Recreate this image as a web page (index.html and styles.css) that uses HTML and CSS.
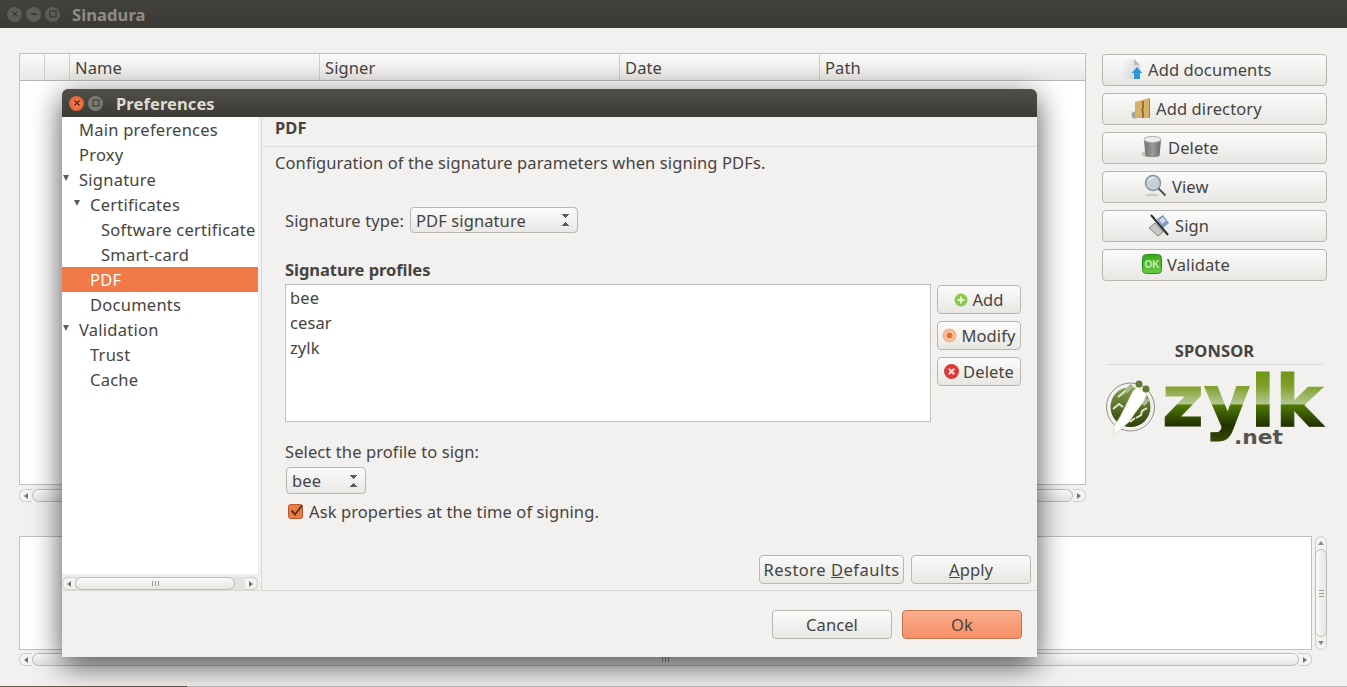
FILE: index.html
```html
<!DOCTYPE html>
<html lang="en">
<head>
    <meta charset="UTF-8">
    <title>Sinadura</title>
    <link rel="stylesheet" href="styles.css">
</head>
<body>
    <div class="titlebar main-title">
        <span class="wbtn"><svg width="8" height="8" viewBox="0 0 8 8"><path d="M1.500 1.500l5 5M6.500 1.500l-5 5" stroke="#2f2e2b" stroke-width="1"/></svg></span>
        <span class="wbtn"><svg width="8" height="8" viewBox="0 0 8 8"><path d="M1 4h6" stroke="#2f2e2b" stroke-width="1.400"/></svg></span>
        <span class="wbtn"><svg width="8" height="8" viewBox="0 0 8 8"><rect x="1" y="1" width="6" height="6" fill="none" stroke="#2f2e2b"/></svg></span>
        <span class="title-text">Sinadura</span>
    </div>

    <div class="main">
        <div class="top">
            <div class="docs">
                <div class="table">
                    <div class="thead">
                        <div class="th"></div>
                        <div class="th"></div>
                        <div class="th">Name</div>
                        <div class="th">Signer</div>
                        <div class="th">Date</div>
                        <div class="th">Path</div>
                    </div>
                </div>
                <div class="hscroll">
                    <span class="step step-l"></span><span class="thumb"></span><span class="step step-r"></span>
                </div>
            </div>

            <div class="actions">
                <button class="btn action pad-docs">
                    <svg width="20" height="22" viewBox="0 0 20 22"><defs><linearGradient id="docg" x1="0" y1="0" x2="1" y2="1"><stop offset="0" stop-color="#f4f4f4"/><stop offset="1" stop-color="#d0d3d6"/></linearGradient></defs><path d="M1 1h10l6 6v14H1z" fill="url(#docg)"/><path d="M11 1l6 6h-6z" fill="#b9bcbf"/><path d="M14 9l5.500 6H17v6h-6v-6H8.500z" fill="#2f97d8"/></svg>
                    Add documents
                </button>
                <button class="btn action pad-dir">
                    <svg width="20" height="24" viewBox="0 0 20 24"><ellipse cx="4" cy="19" rx="3.500" ry="3.500" fill="#a5a39d"/><path d="M4 6l14-4v20H4z" fill="#d8b068"/><path d="M18 2l1 1v19h-1z" fill="#a5803f"/><path d="M12 5v7l-1 2 1 2v6" stroke="#6f5426" stroke-width="1.300" fill="none"/></svg>
                    Add directory
                </button>
                <button class="btn action pad-del">
                    <svg width="22" height="24" viewBox="0 0 22 24"><defs><linearGradient id="can" x1="0" y1="0" x2="1" y2="0"><stop offset="0" stop-color="#6f706e"/><stop offset="0.5" stop-color="#9b9c9a"/><stop offset="1" stop-color="#6a6b69"/></linearGradient></defs><ellipse cx="5" cy="19" rx="4.500" ry="3" fill="#c9c7c3"/><path d="M3 5h17l-1.500 16q-7 2.500-14 0z" fill="url(#can)"/><ellipse cx="11.500" cy="4.500" rx="8.500" ry="3" fill="#eeeeec" stroke="#aaaaa8"/></svg>
                    Delete
                </button>
                <button class="btn action pad-view">
                    <svg width="23" height="24" viewBox="0 0 23 24"><ellipse cx="8" cy="21" rx="7" ry="1.500" fill="#cfcdc9"/><circle cx="9" cy="9" r="7.500" fill="#c5d0d8" stroke="#8b9297" stroke-width="1.500"/><path d="M5 6q2-3 6-2.500" stroke="#e9eef1" stroke-width="1.500" fill="none"/><path d="M14.500 14.500l7 7" stroke="#55524d" stroke-width="2"/></svg>
                    View
                </button>
                <button class="btn action pad-sign">
                    <svg width="22" height="24" viewBox="0 0 22 24"><path d="M9 6l6-4 6 8-6 5z" fill="#7f9cbd"/><path d="M11 7l4-3 3 4-4 3z" fill="#cfdbe8"/><path d="M1 15l6-5 8 9-5 4z" fill="#c9c9c7" stroke="#6a6a68" stroke-width="0.800"/><path d="M3 2l17 20" stroke="#2e2d2a" stroke-width="2"/></svg>
                    Sign
                </button>
                <button class="btn action pad-val">
                    <svg width="20" height="20" viewBox="0 0 20 20"><defs><linearGradient id="okg" x1="0" y1="0" x2="0" y2="1"><stop offset="0" stop-color="#38a81d"/><stop offset="1" stop-color="#6bcb46"/></linearGradient></defs><rect x="0.500" y="0.500" width="19" height="19" rx="4" fill="url(#okg)" stroke="#2b8a17"/><text x="10" y="14" text-anchor="middle" class="ok-mark">OK</text></svg>
                    Validate
                </button>

                <div class="sponsor">
                    <div class="sponsor-title">SPONSOR</div>
                    <svg class="logo" width="217" height="76" viewBox="0 0 217 76">
                        <defs>
                            <linearGradient id="zy" gradientUnits="userSpaceOnUse" x1="0" y1="0" x2="0" y2="76">
                                <stop offset="0" stop-color="#6f9612"/>
                                <stop offset="0.2" stop-color="#80a02a"/>
                                <stop offset="0.43" stop-color="#b3c693"/>
                                <stop offset="0.45" stop-color="#4f7a02"/>
                                <stop offset="0.72" stop-color="#203000"/>
                                <stop offset="1" stop-color="#3c5208"/>
                            </linearGradient>
                            <linearGradient id="ball" x1="0" y1="0" x2="0" y2="1">
                                <stop offset="0" stop-color="#86a050"/>
                                <stop offset="1" stop-color="#2c3f05"/>
                            </linearGradient>
                        </defs>
                        <circle cx="24.500" cy="36" r="24" fill="none" stroke="#8e8e8a"/>
                        <circle cx="24.500" cy="36" r="20" fill="url(#ball)"/>
                        <path d="M12 26l5-4 5-5M7 38l6-5 4 3M30 47l5-3 1-4 5-3M24 51l5-4" stroke="#dfe6c8" stroke-width="2" fill="none"/>
                        <path d="M26 14l-6 7M42 28l-5 6" stroke="#a9b78c" stroke-width="4" fill="none"/>
                        <path d="M8 64l0-9 6-9 13-26 4-4 10 7-3 7-9 12-6 9-6 5z" fill="#fff" stroke="#c9d3a8" stroke-width="0.600"/>
                        <circle cx="33" cy="13" r="3.500" fill="#5f7a30"/>
                        <circle cx="40" cy="18" r="3.500" fill="#5f7a30"/>
                        <text x="56" y="55" class="logo-word" fill="url(#zy)" stroke="url(#zy)" textLength="161" lengthAdjust="spacingAndGlyphs">zylk</text>
                        <text x="128" y="73" class="logo-net" textLength="49" lengthAdjust="spacingAndGlyphs">.net</text>
                    </svg>
                </div>
            </div>
        </div>

        <div class="bottom">
            <div class="log-row">
                <div class="log"></div>
                <div class="vscroll">
                    <span class="vstep vstep-up"></span><span class="vthumb"></span><span class="vstep vstep-down"></span>
                </div>
            </div>
            <div class="hscroll log-scroll">
                <span class="step step-l"></span><span class="thumb"></span><span class="step step-r"></span>
            </div>
        </div>
    </div>
    <div class="desk-edge"></div>

    <!-- preferences dialog floats over the main window -->
    <div class="dialog">
        <div class="titlebar dialog-title">
            <span class="wbtn close"><svg width="8" height="8" viewBox="0 0 8 8"><path d="M1.500 1.500l5 5M6.500 1.500l-5 5" stroke="#5a1d08" stroke-width="1.200"/></svg></span>
            <span class="wbtn maxi"><svg width="8" height="8" viewBox="0 0 8 8"><rect x="1" y="1" width="6" height="6" fill="none" stroke="#35342f"/></svg></span>
            <span class="title-text">Preferences</span>
        </div>

        <div class="dialog-body">
            <div class="side">
                <div class="tree">
                    <div class="node lv0">Main preferences</div>
                    <div class="node lv0">Proxy</div>
                    <div class="node lv0"><span class="arrow"></span>Signature</div>
                    <div class="node lv1"><span class="arrow"></span>Certificates</div>
                    <div class="node lv2">Software certificate</div>
                    <div class="node lv2">Smart-card</div>
                    <div class="node lv1 selected">PDF</div>
                    <div class="node lv1">Documents</div>
                    <div class="node lv0"><span class="arrow"></span>Validation</div>
                    <div class="node lv1">Trust</div>
                    <div class="node lv1">Cache</div>
                </div>
                <div class="side-scroll">
                    <div class="hscroll">
                        <span class="step step-l"></span><span class="thumb"></span><span class="step step-r"></span>
                    </div>
                </div>
            </div>

            <div class="content">
                <div class="page-head">PDF</div>
                <p class="page-desc">Configuration of the signature parameters when signing PDFs.</p>

                <div class="form">
                    <div class="type-row">
                        <span class="type-label">Signature type:</span>
                        <div class="select select-type">PDF signature<span class="updown"></span></div>
                    </div>

                    <div class="group-title">Signature profiles</div>
                    <div class="profiles">
                        <div class="list">
                            <div>bee</div>
                            <div>cesar</div>
                            <div>zylk</div>
                        </div>
                        <div class="list-btns">
                            <button class="btn small"><svg width="14" height="14" viewBox="0 0 14 14"><circle cx="7" cy="7" r="6.500" fill="#8cc850"/><path d="M7 3.500v7M3.500 7h7" stroke="#e4f3d0" stroke-width="2"/></svg>Add</button>
                            <button class="btn small"><svg width="15" height="15" viewBox="0 0 15 15"><circle cx="7.500" cy="7.500" r="7" fill="#f2b78d"/><circle cx="7.500" cy="7.500" r="4.500" fill="#f7d2b4"/><circle cx="7.500" cy="7.500" r="3" fill="#e96f2f"/></svg>Modify</button>
                            <button class="btn small"><svg width="15" height="15" viewBox="0 0 15 15"><circle cx="7.500" cy="7.500" r="7.500" fill="#d93a3a"/><path d="M4.800 4.800l5.400 5.400M10.200 4.800l-5.400 5.400" stroke="#f6dcdc" stroke-width="2.200"/></svg>Delete</button>
                        </div>
                    </div>

                    <div class="select-label">Select the profile to sign:</div>
                    <div class="select select-bee">bee<span class="updown"></span></div>
                    <label class="check-row">
                        <svg width="16" height="16" viewBox="0 0 16 16"><rect x="0.500" y="1.500" width="14" height="14" rx="2" fill="#ef7a45" stroke="#b9572c"/><path d="M3.500 7.500l3.500 4 7-9" fill="none" stroke="#5b3322" stroke-width="2"/></svg>
                        <span>Ask properties at the time of signing.</span>
                    </label>
                </div>

                <div class="page-btns">
                    <button class="btn restore"><span>Restore <u>D</u>efaults</span></button>
                    <button class="btn apply"><span><u>A</u>pply</span></button>
                </div>
            </div>
        </div>

        <div class="dialog-foot">
            <button class="btn foot-btn">Cancel</button>
            <button class="btn foot-btn ok">Ok</button>
        </div>
    </div>
</body>
</html>
```

FILE: styles.css
```css
* {
    box-sizing: border-box;
}
body {
    margin: 0;
    width: 1347px;
    height: 687px;
    overflow: hidden;
    position: relative;
    display: flex;
    flex-direction: column;
    background-color: #f2f1f0;
    font-family: "Noto Sans", "Open Sans", sans-serif;
    font-size: 16.5px;
    letter-spacing: 0.1px;
    color: #46443f;
}

/* window title bars */
.titlebar {
    height: 28px;
    display: flex;
    align-items: center;
    flex-shrink: 0;
    font-weight: 700;
    font-size: 16.5px;
    background: linear-gradient(#504e48, #3c3b37);
}
.main-title {
    padding: 0 0 0 7px;
    gap: 4px;
    background: linear-gradient(#42413c, #3b3a36);
}
.wbtn {
    width: 15px;
    height: 15px;
    border-radius: 50%;
    background: #5d5c56;
    display: flex;
    align-items: center;
    justify-content: center;
}
.main-title .title-text {
    margin-left: 8px;
    color: #8f8d85;
}
.dialog-title {
    padding-left: 7px;
    gap: 4px;
    border-radius: 6px 6px 0 0;
}
.dialog-title .title-text {
    margin-left: 9px;
    color: #dfdbd2;
}
.close {
    background: radial-gradient(#f08a5c, #e0501f);
}
.maxi {
    background: #7b7a72;
}

/* main window */
.main {
    flex: 1;
    padding: 25px 20px 0 19px;
    display: flex;
    flex-direction: column;
}
.top {
    height: 448px;
    display: flex;
    gap: 16px;
}
.docs {
    width: 1067px;
}
.table {
    height: 432px;
    background: #fff;
    border: 1px solid #c1bfba;
}
.thead {
    height: 27px;
    display: grid;
    grid-template-columns: 25px 25px 250px 300px 200px 1fr;
    border-bottom: 1px solid #b9b7b2;
    background: linear-gradient(#fafafa, #e9e8e6);
}
.th {
    padding: 3px 0 0 5px;
    border-right: 1px solid #cfcdc8;
    line-height: 22px;
}
.th:last-child {
    border-right: 0;
}
.actions {
    width: 225px;
    padding-top: 1px;
    display: flex;
    flex-direction: column;
    gap: 7px;
}
.btn {
    font-family: inherit;
    font-size: 16.5px;
    letter-spacing: 0.1px;
    color: #46443f;
    border: 1px solid #b9b6b0;
    border-radius: 4px;
    padding: 0;
    display: flex;
    align-items: center;
    justify-content: center;
    background: linear-gradient(#fbfbfb, #e8e7e4);
}
.action {
    height: 32px;
    gap: 5px;
    padding-bottom: 2px;
    justify-content: flex-start;
    flex-shrink: 0;
}
.pad-docs { padding-left: 20px; }
.pad-dir { padding-left: 28px; }
.pad-del { padding-left: 38px; }
.pad-view { padding-left: 41px; }
.pad-sign { padding-left: 45px; }
.pad-val { padding-left: 39px; }

.sponsor {
    margin-top: 52px;
    padding-left: 4px;
}
.sponsor-title {
    width: 217px;
    height: 25px;
    text-align: center;
    font-weight: 700;
    line-height: 22px;
    border-bottom: 1px solid #dcdad6;
}
.logo {
    display: block;
    margin-top: 6px;
    overflow: visible;
}
.logo-word {
    font-family: "DejaVu Sans", sans-serif;
    font-weight: 700;
    font-size: 72px;
    letter-spacing: 0;
    stroke-width: 1px;
}
.logo-net {
    font-family: "DejaVu Sans", sans-serif;
    font-weight: 700;
    font-size: 20px;
    letter-spacing: 0;
    fill: #55554f;
}
.ok-mark {
    font-family: "Liberation Sans", sans-serif;
    font-weight: 700;
    font-size: 10px;
    letter-spacing: 0;
    fill: #c4eeb0;
}

.bottom {
    margin-top: 35px;
}
.log-row {
    height: 114px;
    display: flex;
    gap: 3px;
}
.log {
    width: 1293px;
    background: #fff;
    border: 1px solid #c1bfba;
}

/* scrollbars */
.hscroll {
    height: 13px;
    margin-top: 4px;
    display: flex;
}
.log-scroll {
    width: 1293px;
    margin-top: 3px;
}
.step {
    width: 13px;
    flex-shrink: 0;
    border: 1px solid #cfcdc8;
    background: #f4f3f2;
    position: relative;
}
.step-l {
    border-radius: 6px 0 0 6px;
    border-right: 0;
}
.step-r {
    border-radius: 0 6px 6px 0;
    border-left: 0;
}
.step::after {
    content: "";
    position: absolute;
    top: 3px;
    border: 3px solid transparent;
}
.step-l::after {
    left: 1px;
    border-right: 4px solid #77756f;
}
.step-r::after {
    right: 1px;
    border-left: 4px solid #77756f;
}
.thumb {
    flex: 1;
    display: flex;
    align-items: center;
    justify-content: center;
    border: 1px solid #bdbbb6;
    border-radius: 7px;
    background: linear-gradient(#fafafa, #e6e5e2);
}
.thumb::after {
    content: "";
    width: 7px;
    height: 5px;
    background: repeating-linear-gradient(to right, #9a988f 0 1px, transparent 1px 3px);
}
.vscroll {
    width: 12px;
    display: flex;
    flex-direction: column;
    border: 1px solid #cfcdc8;
    border-radius: 6px;
    background: #f4f3f2;
}
.vstep {
    height: 12px;
    display: flex;
    align-items: center;
    justify-content: center;
}
.vstep::after {
    content: "";
    border: 3px solid transparent;
}
.vstep-up::after {
    border-top: 0;
    border-bottom: 4px solid #8b8983;
}
.vstep-down::after {
    border-bottom: 0;
    border-top: 4px solid #8b8983;
}
.vthumb {
    flex: 1;
    margin: 0 -1px;
    display: flex;
    align-items: center;
    justify-content: center;
    border: 1px solid #bdbbb6;
    border-radius: 6px;
    background: linear-gradient(to right, #fafafa, #e8e7e4);
}
.vthumb::after {
    content: "";
    width: 5px;
    height: 7px;
    background: repeating-linear-gradient(#9a988f 0 1px, transparent 1px 3px);
}
.desk-edge {
    height: 1px;
    background: linear-gradient(to right, #625a4e 187px, #bdbbb5 187px);
}

/* preferences dialog */
.dialog {
    position: absolute;
    left: 62px;
    top: 89px;
    width: 975px;
    height: 568px;
    display: flex;
    flex-direction: column;
    background: #f2f1f0;
    border-radius: 6px 6px 0 0;
    box-shadow: 0 8px 30px rgba(0, 0, 0, 0.7);
}
.dialog-body {
    height: 474px;
    display: flex;
    border-bottom: 1px solid #dbd9d5;
}
.side {
    width: 200px;
    display: flex;
    flex-direction: column;
    border-right: 1px solid #d9d7d3;
}
.tree {
    width: 196px;
    height: 457px;
    background: #fff;
    letter-spacing: 0.25px;
}
.node {
    height: 25px;
    line-height: 25px;
    white-space: nowrap;
}
.lv0 { padding-left: 17px; }
.lv1 { padding-left: 28px; }
.lv2 { padding-left: 39px; }
.selected {
    color: #fff;
    background: #f27a48;
}
.arrow {
    display: inline-block;
    width: 0;
    height: 0;
    margin-left: -16px;
    margin-right: 10px;
    vertical-align: 5px;
    border: 3.500px solid transparent;
    border-top: 6px solid #5f5d58;
    border-bottom: 0;
}
.side-scroll {
    width: 196px;
    height: 16px;
    background: #eeedeb;
}
.side-scroll .hscroll {
    margin-top: 3px;
    border-radius: 7px;
    background: #e3e2df;
}
.side-scroll .thumb {
    margin-right: 10px;
}
.content {
    flex: 1;
    display: flex;
    flex-direction: column;
}
.page-head {
    height: 30px;
    padding: 0 0 0 13px;
    font-weight: 700;
    line-height: 22px;
    border-bottom: 1px solid #dfddd9;
}
.page-desc {
    margin: 4px 0 0 13px;
    line-height: 24px;
}
.form {
    flex: 1;
    padding: 32px 0 0 23px;
}
.type-row {
    display: flex;
    align-items: center;
    height: 26px;
}
.type-label {
    width: 125px;
}
.select {
    height: 26px;
    display: flex;
    align-items: center;
    justify-content: space-between;
    padding: 0 8px 0 5px;
    border: 1px solid #b9b6b0;
    border-radius: 4px;
    background: linear-gradient(#fbfbfb, #e9e8e5);
}
.select-type {
    width: 168px;
}
.select-bee {
    width: 80px;
    height: 27px;
    margin: 3px 0 0 1px;
}
.updown {
    width: 7px;
    height: 12px;
    background:
        conic-gradient(from 135deg at 50% 0, #5d5b56 90deg, #fff0 90deg) 0 100% / 7px 4px no-repeat,
        conic-gradient(from -45deg at 50% 100%, #5d5b56 90deg, #fff0 90deg) 0 0 / 7px 4px no-repeat;
}
.group-title {
    margin-top: 25px;
    height: 24px;
    font-weight: 700;
    letter-spacing: -0.05px;
    line-height: 24px;
}
.profiles {
    display: flex;
    gap: 6px;
    margin-top: 2px;
}
.list {
    width: 646px;
    height: 138px;
    padding: 0 0 0 4px;
    background: #fff;
    border: 1px solid #c1bfba;
    line-height: 25px;
}
.list-btns {
    width: 84px;
    padding-top: 1px;
    display: flex;
    flex-direction: column;
    gap: 7px;
}
.small {
    height: 29px;
    gap: 4px;
}
.select-label {
    margin-top: 18px;
    height: 24px;
    line-height: 24px;
}
.check-row {
    display: flex;
    align-items: center;
    gap: 5px;
    margin: 5px 0 0 3px;
    height: 24px;
}
.page-btns {
    height: 35px;
    padding: 0 6px 0 0;
    display: flex;
    justify-content: flex-end;
    gap: 7px;
}
.page-btns .btn {
    height: 29px;
}
.restore {
    width: 145px;
    letter-spacing: 0.5px;
}
.apply {
    width: 120px;
}
.dialog-foot {
    flex: 1;
    display: flex;
    justify-content: flex-end;
    gap: 10px;
    padding: 19px 15px 0 0;
}
.foot-btn {
    width: 120px;
    height: 29px;
}
.ok {
    border-color: #bd7551;
    background: linear-gradient(#fcae8c, #f58f66);
}
```
